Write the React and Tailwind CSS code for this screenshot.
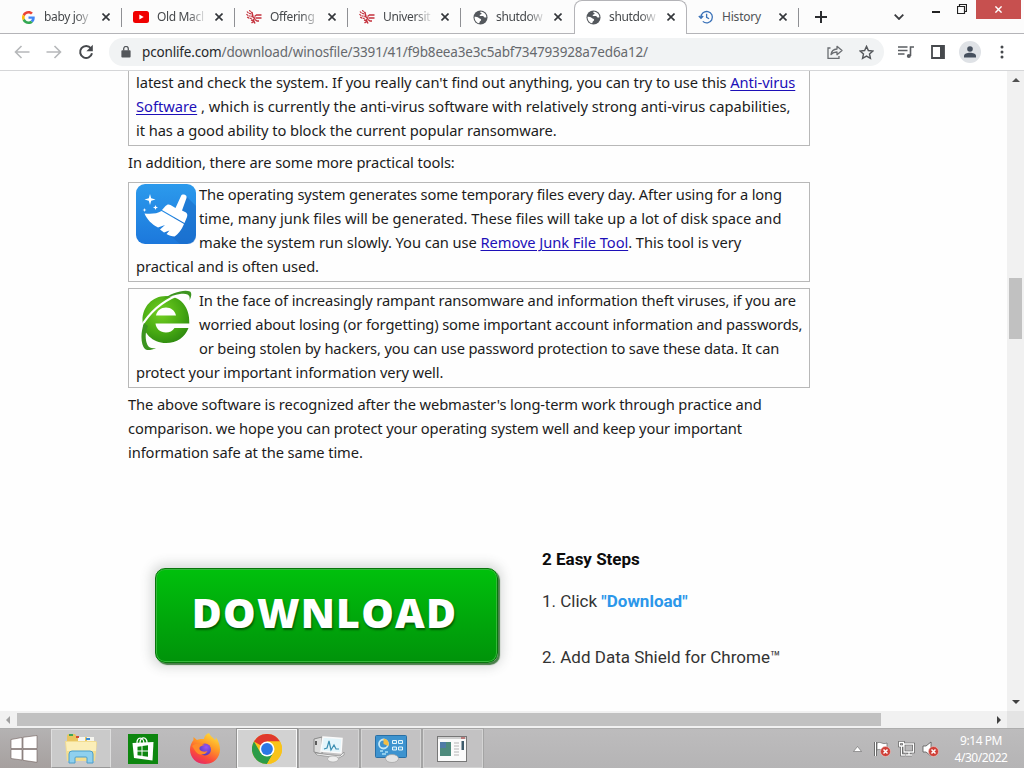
import React from "react";

const GoogleIcon = () => (
  <svg viewBox="0 0 48 48" className="h-[13px] w-[13px]">
    <path fill="#EA4335" d="M24 9.5c3.5 0 6.700 1.200 9.200 3.600l6.900-6.900C35.900 2.400 30.500 0 24 0 14.600 0 6.500 5.400 2.600 13.200l8 6.200C12.400 13.700 17.700 9.500 24 9.500z" />
    <path fill="#4285F4" d="M47 24.500c0-1.600-.2-3.100-.4-4.500H24v9h12.900c-.6 3-2.300 5.500-4.800 7.200l7.700 6C44.400 38 47 32 47 24.500z" />
    <path fill="#FBBC05" d="M10.500 28.600c-.5-1.500-.8-3-.8-4.600s.3-3.100.8-4.600l-8-6.200C.9 16.500 0 20.100 0 24s.9 7.500 2.600 10.800z" />
    <path fill="#34A853" d="M24 48c6.500 0 11.900-2.100 15.900-5.800l-7.700-6c-2.200 1.500-4.900 2.300-8.200 2.300-6.300 0-11.600-4.200-13.500-9.900l-8 6.200C6.500 42.600 14.600 48 24 48z" />
  </svg>
);

const YoutubeIcon = () => (
  <svg viewBox="0 0 16 12" className="h-3 w-4">
    <rect width="16" height="12" rx="2.500" fill="#f00000" />
    <path d="M6.300 3.500v5L10.700 6z" fill="#fff" />
  </svg>
);

const EagleIcon = () => (
  <svg viewBox="0 0 16 16" className="h-4 w-4" fill="none" stroke="#c4313c" strokeWidth="1.200">
    <path d="M1 2.500c1 1.500 2 2 4 2.300M3.500 1c.3 1.500 1.500 2.300 3.200 2.800M.5 5c1 1.700 2.500 2.200 5 2.200M1.200 8c1.500 1.300 3 1.500 4.800 1.200" strokeDasharray="2.200 .5" />
    <path d="M6 4l1 3.500M5.500 7l3 2-1 2.500 1.500 3M5 11l2.500.5M5.500 14l2-1.500" strokeWidth="1.500" />
    <path d="M8.500 7.500l2-1.500h5M9.500 9h6M9 10.500l2 1.500h2" strokeWidth="1.300" />
  </svg>
);

const GlobeIcon = () => (
  <svg viewBox="0 0 16 16" className="h-[15px] w-[15px]">
    <circle cx="8" cy="8" r="7.500" fill="#54585d" />
    <path d="M8.500 1.600c-1 .4-1 1.400 0 1.500 1.200.2.700 1.400-.4 1.600-1.300.2-1.300 1.500-.2 1.700h2.600c1.100 0 1 1.500 2 1.600.9 0 1.100 0 1.800-.3C14.200 4.500 12 2 8.500 1.600zM1.700 7.200c1.600.1 3.300.3 4.500 1.200 1 .8 2.500.7 2.500 2 0 1.300-1.500 1.300-1.700 2.500 0 .7-.1 1.100-.6 1.300C3.500 13.600 1.400 10.600 1.700 7.200z" fill="#fff" />
  </svg>
);

const HistoryIcon = () => (
  <svg viewBox="0 0 16 16" className="h-4 w-4" fill="none" stroke="#3b72b8" strokeWidth="1.300">
    <path d="M3 8.500a5.700 5.700 0 1 1 1.800 3.900M.8 7l2.200 2.300L5.200 7" />
    <path d="M8.600 4.800v3.600l2.500 1.400" />
  </svg>
);

const CloseIcon = ({ className = "h-2 w-2" }) => (
  <svg viewBox="0 0 8 8" className={className} fill="none" stroke="currentColor" strokeWidth="1.600">
    <path d="M.5.5l7 7M7.500.5l-7 7" />
  </svg>
);

const TABS = [
  { title: "baby joy", icon: <GoogleIcon />, divider: true },
  { title: "Old Macl", icon: <YoutubeIcon />, divider: true },
  { title: "Offering", icon: <EagleIcon />, divider: true },
  { title: "Universit", icon: <EagleIcon />, divider: true },
  { title: "shutdow", icon: <GlobeIcon />, divider: false },
  { title: "shutdow", icon: <GlobeIcon />, active: true },
  { title: "History", icon: <HistoryIcon />, divider: true, short: true },
];

function Tab({ title, icon, divider, active, short }) {
  return (
    <div
      className={
        active
          ? "flex h-[34px] w-[113px] shrink-0 items-start rounded-t-lg border border-b-0 border-[#b4b4b8] bg-white pt-2 pl-[10px]"
          : "flex h-[33px] w-[113px] shrink-0 items-start pt-[9px] pl-[11px]"
      }
    >
      <span className="flex h-4 w-4 items-center justify-center">{icon}</span>
      <span
        className={
          short
            ? "ml-2 h-4 w-[48px] text-[12px] leading-4 tracking-[-0.2px] whitespace-nowrap text-[#505356]"
            : "ml-2 h-4 w-[48px] mask-r-from-65% mask-r-to-105% text-[12px] leading-4 tracking-[-0.35px] whitespace-nowrap text-[#45484b]"
        }
      >
        {title}
      </span>
      <span className={short ? "mt-1 ml-[9px] text-[#33363a]" : "mt-1 ml-[10px] text-[#33363a]"}>
        <CloseIcon />
      </span>
      {divider && (
        <span className={short ? "-mt-[1px] mr-px ml-auto h-[19px] w-px bg-[#8f9094]" : "-mt-[1px] ml-auto h-[19px] w-px bg-[#8f9094]"} />
      )}
    </div>
  );
}

function TabStrip() {
  return (
    <div className="flex h-[34px] shrink-0 items-start border-b border-[#b4b4b8] bg-[#fcfcfc] pl-[9px]">
      {TABS.map((tab, i) => (
        <Tab key={i} {...tab} />
      ))}
      <svg viewBox="0 0 12 12" className="mt-[11px] ml-[15px] h-3 w-3 shrink-0" stroke="#2b2d30" strokeWidth="2">
        <path d="M6 0v12M0 6h12" />
      </svg>
      <svg viewBox="0 0 10 6" className="mt-[14px] ml-[67px] h-[6px] w-[10px] shrink-0" fill="none" stroke="#3a3c3f" strokeWidth="1.800">
        <path d="M.7.7L5 5 9.300.7" />
      </svg>
      <span className="mt-[11px] ml-[28px] h-[2px] w-2 shrink-0 bg-[#222]" />
      <svg viewBox="0 0 10 10" className="mt-1 ml-[17px] h-[10px] w-[10px] shrink-0" fill="none" stroke="#222">
        <path d="M.5 2.500h7v7h-7zM2.500 2V.5h7v7H8" strokeWidth="1.200" />
      </svg>
      <span className="ml-auto flex h-[19px] w-[45px] shrink-0 items-center justify-center bg-[#c7504f] text-white">
        <CloseIcon className="h-[7px] w-[7px]" />
      </span>
      <span className="w-[3px] shrink-0" />
    </div>
  );
}

function Toolbar() {
  return (
    <div className="flex h-[37px] shrink-0 items-center border-b border-[#d5d6d8] bg-white pl-[14px]">
      <svg viewBox="0 0 16 14" className="h-[14px] w-4" fill="none" stroke="#b6b8ba" strokeWidth="1.600">
        <path d="M15.500 7H1.500M7.500 1l-6 6 6 6" />
      </svg>
      <svg viewBox="0 0 16 14" className="ml-4 h-[14px] w-4" fill="none" stroke="#b6b8ba" strokeWidth="1.600">
        <path d="M.5 7h14M8.500 1l6 6-6 6" />
      </svg>
      <svg viewBox="0 0 16 16" className="ml-4 h-4 w-4" fill="none" stroke="#46494d" strokeWidth="2">
        <path d="M12.900 4.300A6 6 0 1 0 14 9.300" />
        <path d="M14.800.8v6.400H8.400z" fill="#46494d" stroke="none" />
      </svg>
      <div className="ml-[15px] flex h-7 w-[775px] items-center rounded-full bg-[#f1f3f4] pl-3">
        <svg viewBox="0 0 10 13" className="h-3 w-[10px]" fill="#54575b">
          <rect y="4.500" width="10" height="8" rx="1" />
          <path d="M2.500 5V3a2.500 2.500 0 0 1 5 0v2" fill="none" stroke="#54575b" strokeWidth="1.400" />
        </svg>
        <span className="ml-[11px] text-[13.500px] leading-5 tracking-[-0.155px] whitespace-nowrap text-[#66696d]">
          <span className="text-[#26282b]">pconlife.com</span>/download/winosfile/3391/41/f9b8eea3e3c5abf734793928a7ed6a12/
        </span>
        <svg viewBox="0 0 16 14" className="mr-4 ml-auto h-[14px] w-4" fill="none" stroke="#6a6d71" strokeWidth="1.300">
          <path d="M3.500 3H1v10.300h11V11" />
          <path d="M4 9.500c.5-3.500 2.500-5.300 6-5.500V1.300L15 5.500l-5 4.200V7C7.500 7 5.500 7.800 4 9.500z" strokeLinejoin="round" />
        </svg>
        <svg viewBox="0 0 16 16" className="mr-[10px] h-[15px] w-[15px]" fill="none" stroke="#54575b" strokeWidth="1.500">
          <path d="M8 1.500l2 4.400 4.800.5-3.600 3.200 1 4.700L8 11.900l-4.200 2.400 1-4.700L1.200 6.400 6 5.900z" />
        </svg>
      </div>
      <svg viewBox="0 0 16 14" className="ml-[14px] h-[14px] w-4" fill="none" stroke="#5a5d61" strokeWidth="1.600">
        <path d="M0 2h9.500M0 5.500h9.500M0 9h6.500M12.500 11V2H16" />
        <circle cx="10.800" cy="11" r="2" fill="#5a5d61" stroke="none" />
      </svg>
      <svg viewBox="0 0 14 14" className="ml-[17px] h-[14px] w-[14px]">
        <path d="M1 1h12v12H1z" fill="none" stroke="#46494d" strokeWidth="1.800" />
        <path d="M9 1h4v12H9z" fill="#46494d" />
      </svg>
      <span className="ml-[14px] flex h-[22px] w-[22px] items-center justify-center rounded-full bg-[#dfe2e6]">
        <svg viewBox="0 0 12 12" className="h-3 w-3" fill="#46505e">
          <circle cx="6" cy="3" r="2.800" />
          <path d="M0 11.500V10c0-2 3-3.200 6-3.200S12 8 12 10v1.500z" />
        </svg>
      </span>
      <svg viewBox="0 0 4 14" className="ml-[19px] h-[14px] w-1" fill="#46494d">
        <circle cx="2" cy="2" r="1.500" />
        <circle cx="2" cy="7" r="1.500" />
        <circle cx="2" cy="12" r="1.500" />
      </svg>
    </div>
  );
}

const Line = ({ className, children }) => (
  <span className={`block h-6 leading-[22px] whitespace-nowrap ${className}`}>{children}</span>
);

const Link = ({ children }) => (
  <a className="text-[#1d10b8] underline underline-offset-2">{children}</a>
);

const BroomIcon = () => (
  <svg viewBox="0 0 60 60" className="h-[60px] w-[60px]">
    <defs>
      <linearGradient id="broomBg" x1="0" y1="0" x2="0" y2="1">
        <stop offset="0" stopColor="#2c9aec" />
        <stop offset="1" stopColor="#1c78dc" />
      </linearGradient>
    </defs>
    <rect width="60" height="60" rx="9" fill="url(#broomBg)" />
    <path d="M50 12l10 10v29q0 9-9 9H44L30 48z" fill="#1767c4" opacity=".5" />
    <path d="M45 12c1-2.500 6.500-1.500 5.500 2L46 26.500l4 2c1.500 1 1.500 3 1 4.500l-2.500 6L26 26l3.500-4c1.500-1.500 3-2 5-1l5 3z" fill="#fff" />
    <path d="M25.500 27L48 40c-2 5-5.500 10-9.500 12.500-3-.2-5.500-1-8-2.500l3-3.500-5.500 2-4-3 5-4.500-7 2.500c-6-3-11-8-13.500-14 6 .5 12.500.5 17-2.500z" fill="#fff" />
    <path d="M14 10l1.200 4.300L19.500 15.500l-4.300 1.200L14 21l-1.200-4.300L8.500 15.500l4.300-1.200zM19.500 21l.7 1.800 1.800.7-1.800.7-.7 1.800-.7-1.800-1.800-.7 1.800-.7zM8.500 24l.5 1.500 1.500.5-1.500.5-.5 1.500-.5-1.500-1.500-.5 1.500-.5z" fill="#fff" />
  </svg>
);

const GreenEIcon = () => (
  <svg viewBox="0 0 60 60" className="h-[60px] w-[60px]">
    <defs>
      <radialGradient id="eFill" cx=".4" cy=".35" r=".75">
        <stop offset="0" stopColor="#74d022" />
        <stop offset=".6" stopColor="#46a812" />
        <stop offset="1" stopColor="#2a8410" />
      </radialGradient>
    </defs>
    <path d="M30 6C16 6 6.500 17 6.500 30c0 13 10 23 23.500 23 11 0 19-6 22.500-15H38.500c-2 3-5 4.500-8.500 4.500-6 0-10-4-10.500-9H53.300C54 17 44.500 6 30 6zM20 25.500c1-5 5-8 10-8s9 3 10 8z" fill="url(#eFill)" />
    <path d="M5 37C13 23 25 12 42 5" fill="none" stroke="#fff" strokeWidth="2.200" />
    <path d="M8 33C4 44 5 55 9 59c3 2 7 1 11-1-4 .5-7 0-8.500-3C9 50 9 42 12 36zM26 10C35 3 48-1 54 1.500c2 1.500 1.500 5-.5 9 .5-3 0-5-2-6C47 2.500 36 5 26 10z" fill="#3c9420" />
  </svg>
);

function Article() {
  return (
    <div className="w-[682px] shrink-0 text-[14.7px] text-[#1c1c1c]">
      <div className="border border-t-0 border-[#b8b8b8] pb-[2px] pl-[7px]">
        <Line className="tracking-[-0.075px]">latest and check the system. If you really can't find out anything, you can try to use this <Link>Anti-virus</Link></Line>
        <Line className="tracking-[0px]"><Link>Software</Link> , which is currently the anti-virus software with relatively strong anti-virus capabilities,</Line>
        <Line className="tracking-[-0.085px]">it has a good ability to block the current popular ransomware.</Line>
      </div>
      <p className="mt-[5px]">
        <Line className="tracking-[-0.1px]">In addition, there are some more practical tools:</Line>
      </p>
      <div className="mt-[7px] h-[100px] border border-[#b8b8b8] pl-[7px]">
        <div className="flex">
          <span className="mt-px mr-[3px] h-[60px] w-[60px] shrink-0"><BroomIcon /></span>
          <div>
            <Line className="tracking-[-0.155px]">The operating system generates some temporary files every day. After using for a long</Line>
            <Line className="tracking-[-0.03px]">time, many junk files will be generated. These files will take up a lot of disk space and</Line>
            <Line className="tracking-[-0.07px]">make the system run slowly. You can use <Link>Remove Junk File Tool</Link>. This tool is very</Line>
          </div>
        </div>
        <Line className="tracking-[-0.06px]">practical and is often used.</Line>
      </div>
      <div className="mt-[6px] h-[100px] border border-[#b8b8b8] pl-[7px]">
        <div className="flex">
          <span className="mt-px mr-[3px] h-[60px] w-[60px] shrink-0"><GreenEIcon /></span>
          <div>
            <Line className="tracking-[-0.125px]">In the face of increasingly rampant ransomware and information theft viruses, if you are</Line>
            <Line className="tracking-[-0.14px]">worried about losing (or forgetting) some important account information and passwords,</Line>
            <Line className="tracking-[-0.14px]">or being stolen by hackers, you can use password protection to save these data. It can</Line>
          </div>
        </div>
        <Line className="tracking-[-0.11px]">protect your important information very well.</Line>
      </div>
      <p className="mt-[5px]">
        <Line className="tracking-[-0.115px]">The above software is recognized after the webmaster's long-term work through practice and</Line>
        <Line className="tracking-[-0.14px]">comparison. we hope you can protect your operating system well and keep your important</Line>
        <Line className="tracking-[-0.1px]">information safe at the same time.</Line>
      </p>
    </div>
  );
}

function DownloadAd() {
  return (
    <div className="mt-[82px] flex items-start pl-[27px]">
      <button className="mt-[21px] h-[95px] w-[343px] shrink-0 rounded-[10px] border border-[#08750c] bg-linear-to-b from-[#00c00c] to-[#00930a] pr-1 pb-[7px] text-center font-['Open_Sans',sans-serif] text-[41px] leading-[85px] font-extrabold tracking-[1.200px] text-white shadow-[inset_0_0_0_1px_#36b83c,2px_2px_1px_#477d48,0_0_12px_4px_rgba(60,70,65,0.2)] text-shadow-[1px_2px_2px_rgba(0,60,0,0.7)]">
        DOWNLOAD
      </button>
      <div className="ml-[44px] font-[Roboto,sans-serif] text-[17px] leading-6 whitespace-nowrap text-[#333]">
        <p className="font-bold text-[#0c0c0c]">2 Easy Steps</p>
        <p className="mt-[18px]">1. Click <b className="text-[#2c97ea]">"Download"</b></p>
        <p className="mt-8">2. Add Data Shield for Chrome™</p>
      </div>
    </div>
  );
}

function VerticalScrollbar() {
  return (
    <div className="flex w-[17px] shrink-0 flex-col items-center bg-[#f1f1f1]">
      <svg viewBox="0 0 8 4" className="mt-[7px] h-1 w-2" fill="#505050"><path d="M0 4l4-4 4 4z" /></svg>
      <span className="mt-[196px] h-[61px] w-[13px] bg-[#c1c1c1]" />
      <svg viewBox="0 0 8 4" className="mt-auto mb-[7px] h-1 w-2" fill="#404040"><path d="M0 0l4 4 4-4z" /></svg>
    </div>
  );
}

function HorizontalScrollbar() {
  return (
    <div className="flex h-[17px] shrink-0 items-center bg-[#f1f1f1]">
      <svg viewBox="0 0 4 8" className="ml-[6px] h-2 w-1" fill="#a0a0a0"><path d="M4 0L0 4l4 4z" /></svg>
      <span className="ml-[7px] h-[13px] w-[864px] bg-[#c1c1c1]" />
      <svg viewBox="0 0 4 8" className="ml-auto h-2 w-1" fill="#404040"><path d="M0 0l4 4-4 4z" /></svg>
      <span className="ml-[6px] h-full w-[17px] bg-[#e4e4e4]" />
    </div>
  );
}

const ExplorerIcon = () => (
  <svg viewBox="0 0 34 32" className="h-8 w-[34px]">
    <path d="M3 3q0-2 2-2h6l2 3h17v24H3z" fill="#e8c560" />
    <path d="M5 1h4v2H5z" fill="#3da558" /><path d="M14 4h7v4h-7zM23 4h7v4h-7z" fill="#f5f5ef" />
    <path d="M12 3h3v2h-3z" fill="#d34a35" /><path d="M22 5h4v2h-4z" fill="#3c8fd6" />
    <path d="M1 8h30q2 0 2 2l-2 18H3z" fill="#f3dd90" />
    <path d="M2 9h30v9H3z" fill="#fbeeb8" />
    <path d="M5 30v-9q0-3 3-3h18q3 0 3 3v9h-6v-5q0-1-1-1H12q-1 0-1 1v5z" fill="#8fd0ee" stroke="#4b9ecb" strokeWidth="1" />
  </svg>
);

const StoreIcon = () => (
  <svg viewBox="0 0 30 30" className="h-[30px] w-[30px]">
    <rect width="30" height="30" fill="#0d860f" />
    <path d="M4.500 9l21 -1-1 18.500L6 24z" fill="#fff" />
    <path d="M9 10c-1-8 7-7.500 7 0M12 9c0-7 7.500-6.500 7 0" fill="none" stroke="#fff" strokeWidth="1.300" />
    <path d="M9.500 12.800l4-.6v4.300l-4 .1zM14.500 12l5.500-.8v5.200l-5.500.1zM9.500 17.500h4v4.300l-4-.5zM14.500 17.500H20v5.200l-5.500-.8z" fill="#0d860f" />
  </svg>
);

const FirefoxIcon = () => (
  <svg viewBox="0 0 32 32" className="h-8 w-8">
    <defs>
      <linearGradient id="ffBody" x1=".8" y1="0" x2=".3" y2="1">
        <stop offset="0" stopColor="#ffe23c" />
        <stop offset=".4" stopColor="#ff9a26" />
        <stop offset=".75" stopColor="#fb4a3c" />
        <stop offset="1" stopColor="#e42a68" />
      </linearGradient>
      <radialGradient id="ffGlobe" cx=".6" cy=".3" r=".8">
        <stop offset="0" stopColor="#9a55f2" />
        <stop offset="1" stopColor="#4a38b4" />
      </radialGradient>
    </defs>
    <path d="M20 0c1 3 4 4.500 6 7 1-.5.800-2 .5-3 3 3.500 4.500 8 4.500 12.500C31 25 24.500 31 16 31S1 25 1 16.500c0-4 1.500-7 3.500-9.500v-3L8 7c3-1.500 5-1 7-1 0-2.500 2-5 5-6z" fill="url(#ffBody)" />
    <circle cx="16" cy="16.500" r="6" fill="url(#ffGlobe)" />
    <path d="M3 13c3-3 8-3.500 13-1-2 0-3 1-4.500 1.500C10 14 10 16 11 17c2 2 5 2 7.500 1-1.500 3.500-7 5-10.500 2C5.500 18 5 15 3 13z" fill="#ff8a2a" />
  </svg>
);

const ChromeIcon = () => (
  <svg viewBox="0 0 30 30" className="h-[30px] w-[30px]">
    <circle cx="15" cy="15" r="15" fill="#f9c319" />
    <path d="M15 15L2 7.500A15 15 0 0 1 28 7.500H15z" fill="#e0392d" />
    <path d="M2 7.500A15 15 0 0 0 15 30l6.500-11.300L15 15 8.500 18.800z" fill="#2c9c48" />
    <path d="M15 7.500h13A15 15 0 0 1 15 30l6.500-11.300z" fill="#f9c319" />
    <circle cx="15" cy="15" r="7.500" fill="#fff" />
    <circle cx="15" cy="15" r="5.900" fill="#2b78e4" />
  </svg>
);

const MonitorIcon = () => (
  <svg viewBox="0 0 32 28" className="h-7 w-8">
    <path d="M1 4l8-2v17l-8-2z" fill="#dcdcdc" stroke="#8a8a8a" /><path d="M3 6v4" stroke="#333" strokeWidth="1.500" />
    <path d="M10 2l19 1.500-1 14.500L8 16z" fill="#e4f5fb" stroke="#fafafa" strokeWidth="1.500" />
    <path d="M11 14l3-1 2-7 2 9 3-5 2 4 3 0" fill="none" stroke="#3a8eb2" strokeWidth="1.200" />
    <path d="M2 18l25 3 4-4v3l-5 3-22-3z" fill="#f3f3f3" stroke="#8a8a8a" strokeWidth=".7" />
    <ellipse cx="20" cy="24" rx="5.500" ry="3" fill="#eee" stroke="#aaa" strokeWidth=".7" />
  </svg>
);

const ControlPanelIcon = () => (
  <svg viewBox="0 0 32 28" className="h-7 w-8">
    <rect x=".5" y=".5" width="31" height="22" rx="1" fill="#3d93cf" stroke="#286fa5" />
    <circle cx="8.500" cy="9" r="4.500" fill="#3d93cf" stroke="#c5e7f5" strokeWidth="1.800" /><path d="M8.500 9V3.500A5.500 5.500 0 0 1 13.500 11z" fill="#f4bd43" />
    <path d="M17.500 5.500h4v3h-4zM23.500 5.500h4v3h-4zM17.500 12h4v3h-4zM23.500 12h4v3h-4z" fill="#4ca3d8" stroke="#e4f5fc" />
    <path d="M5 16h3M10 17h3M7 19h4" stroke="#a8e0f6" strokeWidth="1.500" />
    <ellipse cx="17" cy="23.500" rx="6.500" ry="4" fill="#e4e4e4" stroke="#a0a0a0" strokeWidth=".7" />
  </svg>
);

const DocumentIcon = () => (
  <svg viewBox="0 0 30 26" className="mr-[2px] h-[26px] w-[30px]">
    <rect x=".5" y=".5" width="29" height="25" fill="#fafafa" stroke="#777" />
    <path d="M1 2h28" stroke="#d0d0d0" strokeWidth="2" /><path d="M24 2h4" stroke="#a44" strokeWidth="1.200" />
    <path d="M3 6h11v14H3z" fill="#4d8a7c" /><path d="M3 6h6v6H3z" fill="#4f7ba6" />
    <path d="M17 7h5M17 10h5M17 13h5M17 16h5M17 19h5" stroke="#b4b4b4" />
    <path d="M24.500 5h2.500v9h-2.500z" fill="#3e5b6b" />
  </svg>
);

const APPS = [
  { name: "Explorer", icon: <ExplorerIcon />, look: "border-[#dedede] border-b-[#999] bg-[#cacaca]" },
  { name: "Store", icon: <StoreIcon />, look: "border-transparent" },
  { name: "Firefox", icon: <FirefoxIcon />, look: "border-transparent" },
  { name: "Chrome", icon: <ChromeIcon />, look: "border-[#f8f8f8] bg-[#d2d2d2] outline outline-[#949494]" },
  { name: "Task Manager", icon: <MonitorIcon />, look: "border-[#d4d4d4] bg-[#c3c2c3] outline outline-[#a4a4a4]" },
  { name: "Control Panel", icon: <ControlPanelIcon />, look: "border-[#d4d4d4] bg-[#c3c2c3] outline outline-[#a4a4a4]" },
  { name: "Viewer", icon: <DocumentIcon />, look: "border-[#d4d4d4] bg-[#c3c2c3] outline outline-[#a4a4a4]" },
];

const ErrorBadge = () => (
  <>
    <circle cx="11.500" cy="10.500" r="5" fill="#cf4038" stroke="#f1c8c4" strokeWidth=".6" />
    <path d="M9.500 8.500l4 4M13.500 8.500l-4 4" stroke="#fff" strokeWidth="1.500" />
  </>
);

function Taskbar() {
  return (
    <div className="flex h-10 shrink-0 items-center border-t border-[#adadad] bg-linear-to-b from-[#bdbcbd] to-[#b5b4b5]">
      <div className="flex h-full w-[51px] shrink-0 items-center justify-center bg-linear-to-b from-[#b4b2b2] to-[#a6a09f]">
        <svg viewBox="0 0 28 28" className="mr-[3px] h-7 w-7" fill="#fff" stroke="#705f5c" strokeWidth=".6">
          <path d="M1 4.500l11-2v11H1zM13 2.300L27 .5v13H13zM1 14.500h11V25L1 23.500zM13 14.500h14v12.800l-14-2z" />
        </svg>
      </div>
      <div className="flex h-full gap-[2px]">
        {APPS.map((app) => (
          <div key={app.name} className={`flex h-[39px] w-[60px] items-center justify-center border ${app.look}`}>
            {app.icon}
          </div>
        ))}
      </div>
      <svg viewBox="0 0 9 6" className="ml-auto h-[6px] w-[9px]" fill="#fff" stroke="#666" strokeWidth=".6"><path d="M.5 5.500l4-5 4 5z" /></svg>
      <svg viewBox="0 0 17 16" className="ml-3 h-4 w-[17px]">
        <path d="M1.500 1v14" stroke="#555" strokeWidth="2.500" /><path d="M1.500 1v14" stroke="#fff" />
        <path d="M3 2c4-2 5 2 10 0v7c-5 2-6-2-10 0z" fill="#fff" stroke="#666" strokeWidth=".7" />
        <ErrorBadge />
      </svg>
      <svg viewBox="0 0 17 16" className="ml-[7px] h-4 w-[17px]" fill="none">
        <path d="M6 3h9.500v8H6zM8 14h6M11 11v3M3.500 5v9h4M1.500 1.500h4V5h-4z" stroke="#555" strokeWidth="2.600" />
        <path d="M6 3h9.500v8H6zM8 14h6M11 11v3M3.500 5v9h4M1.500 1.500h4V5h-4z" stroke="#fff" strokeWidth="1.300" />
      </svg>
      <svg viewBox="0 0 17 16" className="ml-[7px] h-4 w-[17px]">
        <path d="M1 5h3l5-4v14l-5-4H1z" fill="#fff" stroke="#555" strokeWidth=".8" />
        <ErrorBadge />
      </svg>
      <div className="mr-[15px] ml-[14px] w-[56px] text-center text-[12px] leading-[17px] tracking-[-0.45px] whitespace-nowrap text-white">
        <div>9:14 PM</div>
        <div>4/30/2022</div>
      </div>
    </div>
  );
}

export default function App() {
  return (
    <div className="flex h-[768px] w-[1024px] flex-col overflow-hidden bg-white font-['Noto_Sans',sans-serif]">
      <TabStrip />
      <Toolbar />
      <div className="flex min-h-0 flex-1">
        <main className="min-w-0 flex-1 overflow-hidden bg-[#fefefe] pl-[128px]">
          <Article />
          <DownloadAd />
        </main>
        <VerticalScrollbar />
      </div>
      <HorizontalScrollbar />
      <Taskbar />
    </div>
  );
}
